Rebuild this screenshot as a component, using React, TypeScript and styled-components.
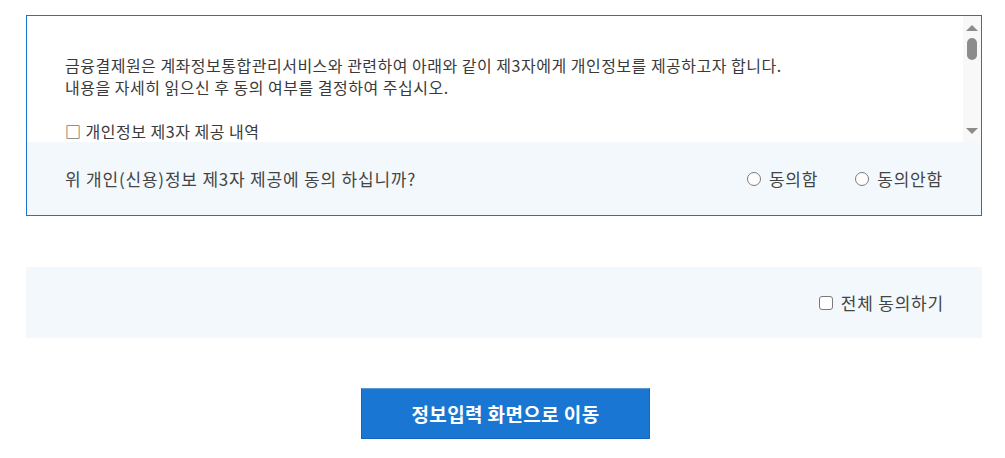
import React from "react";
import styled, { createGlobalStyle } from "styled-components";

const GlobalStyle = createGlobalStyle`
  html, body { margin: 0; padding: 0; background: #ffffff; }
  body {
    font-family: "Noto Sans CJK KR", "Noto Sans", "Liberation Sans", sans-serif;
    color: #333333;
  }
  * { box-sizing: border-box; }
`;

const Page = styled.div`
  width: 1005px;
  padding: 15px 23px 20px 26px;
  display: flex;
  flex-direction: column;
`;

const AgreeBox = styled.section`
  height: 201px;
  border: 1px solid #1a76c9;
  display: flex;
  flex-direction: column;
  background: #ffffff;
`;

const ScrollArea = styled.div`
  height: 126px;
  display: flex;
  flex-direction: row;
  flex-shrink: 0;
`;

const ScrollContent = styled.div`
  flex: 1;
  overflow: hidden;
  padding: 38px 38px 0 38px;
  font-size: 16px;
  line-height: 22px;
  color: #3a3a3a;
  letter-spacing: 0.5px;
`;

const Para = styled.p<{ $gap?: number }>`
  margin: 0 0 ${(p) => p.$gap ?? 0}px 0;
  white-space: nowrap;
`;

const ScrollTrack = styled.div`
  width: 18px;
  background: #f8f8f8;
  display: flex;
  flex-direction: column;
  align-items: center;
  padding-top: 9px;
`;

const Thumb = styled.div`
  width: 10px;
  height: 22px;
  border-radius: 5px;
  background: #8c8c8c;
  margin-top: 7px;
`;

const TrackSpacer = styled.div`
  flex: 1;
`;

const ArrowIcon = styled.svg<{ $bottom?: number }>`
  display: block;
  flex-shrink: 0;
  margin-bottom: ${(p) => p.$bottom ?? 0}px;
`;

const QuestionBar = styled.div`
  flex: 1;
  background: #f2f8fc;
  display: flex;
  align-items: center;
  justify-content: space-between;
  padding: 0 38px 0 38px;
  font-size: 17px;
  letter-spacing: 0.8px;
  color: #444444;
`;

const Question = styled.span`
  white-space: nowrap;
`;

const RadioGroup = styled.div`
  display: flex;
  align-items: center;
  gap: 37px;
`;

const Choice = styled.label`
  display: flex;
  align-items: center;
  gap: 8px;
  white-space: nowrap;
`;

const RadioDot = styled.span`
  width: 14px;
  height: 14px;
  border-radius: 50%;
  border: 1.5px solid #7a7a7a;
  background: #ffffff;
  display: inline-block;
`;

const AllAgreePanel = styled.div`
  margin-top: 51px;
  height: 71px;
  background: #f2f8fc;
  display: flex;
  align-items: center;
  justify-content: flex-end;
  padding-right: 38px;
  font-size: 17px;
  letter-spacing: 0.8px;
  color: #444444;
`;

const CheckBox = styled.span`
  width: 14px;
  height: 14px;
  border-radius: 3px;
  border: 1.5px solid #7a7a7a;
  background: #ffffff;
  display: inline-block;
`;

const ButtonRow = styled.div`
  margin-top: 50px;
  display: flex;
  justify-content: center;
  padding-left: 3px;
`;

const PrimaryButton = styled.button`
  width: 289px;
  height: 51px;
  background: #1976d2;
  border: 1px solid #1565c0;
  border-top-color: #5b9ad6;
  color: #ffffff;
  font-family: "Noto Sans CJK KR", "Noto Sans", sans-serif;
  font-size: 19px;
  letter-spacing: 0.4px;
  font-weight: 700;
  cursor: pointer;
  padding: 0;
`;

export default function App() {
  return (
    <>
      <GlobalStyle />
      <Page>
        <AgreeBox>
          <ScrollArea>
            <ScrollContent>
              <Para>
                금융결제원은 계좌정보통합관리서비스와 관련하여 아래와 같이 제3자에게 개인정보를 제공하고자 합니다.
              </Para>
              <Para $gap={22}>내용을 자세히 읽으신 후 동의 여부를 결정하여 주십시오.</Para>
              <Para>□ 개인정보 제3자 제공 내역</Para>
            </ScrollContent>
            <ScrollTrack>
              <ArrowIcon width="12" height="6" viewBox="0 0 12 6">
                <polygon points="6,0 12,6 0,6" fill="#8c8c8c" />
              </ArrowIcon>
              <Thumb />
              <TrackSpacer />
              <ArrowIcon width="12" height="6" viewBox="0 0 12 6" $bottom={8}>
                <polygon points="0,0 12,0 6,6" fill="#8c8c8c" />
              </ArrowIcon>
            </ScrollTrack>
          </ScrollArea>
          <QuestionBar>
            <Question>위 개인(신용)정보 제3자 제공에 동의 하십니까?</Question>
            <RadioGroup>
              <Choice>
                <RadioDot />
                동의함
              </Choice>
              <Choice>
                <RadioDot />
                동의안함
              </Choice>
            </RadioGroup>
          </QuestionBar>
        </AgreeBox>
        <AllAgreePanel>
          <Choice>
            <CheckBox />
            전체 동의하기
          </Choice>
        </AllAgreePanel>
        <ButtonRow>
          <PrimaryButton>정보입력 화면으로 이동</PrimaryButton>
        </ButtonRow>
      </Page>
    </>
  );
}
